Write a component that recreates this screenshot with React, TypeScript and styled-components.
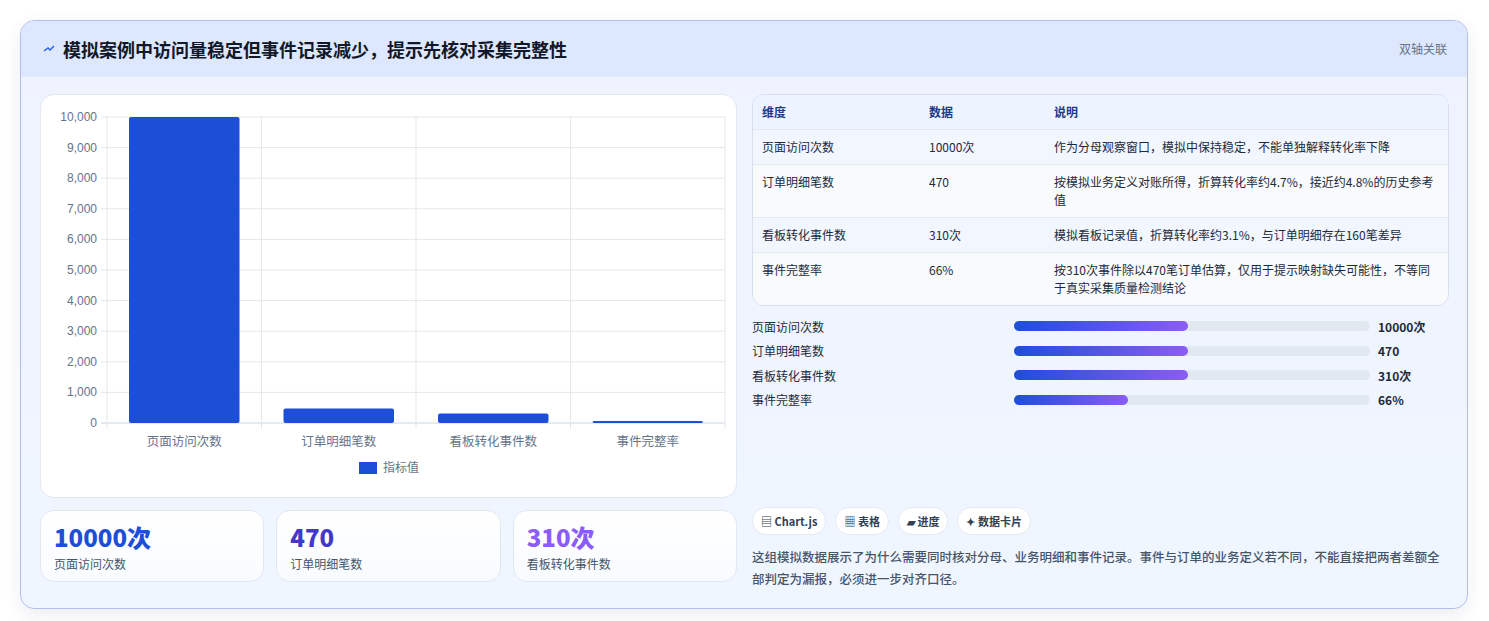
import styled, { createGlobalStyle } from 'styled-components';

const GlobalStyle = createGlobalStyle`
  body {
    margin: 0;
    background: #ffffff;
    font-family: "Noto Sans CJK SC", "Noto Sans", sans-serif;
    color: #1e293b;
  }
`;

const Page = styled.div`
  padding: 20px 21px 22px 20px;
`;

const Panel = styled.section`
  border: 1px solid #b4c0ec;
  border-radius: 14px;
  background: linear-gradient(180deg, #eef3ff 0%, #f0f6ff 100%);
  box-shadow: 0 6px 18px rgba(30, 41, 90, 0.08);
  overflow: hidden;
`;

const Header = styled.header`
  height: 55px;
  display: flex;
  align-items: center;
  justify-content: space-between;
  padding: 0 20px 0 22px;
  background: #dde7fd;
  border-bottom: 1px solid #e3eafb;
`;

const Title = styled.h2`
  margin: 0;
  font-size: 18px;
  font-weight: 700;
  color: #111827;
  display: flex;
  align-items: center;
  gap: 8px;
`;

const Tag = styled.span`
  font-size: 12px;
  color: #64748b;
`;

const Body = styled.div`
  display: grid;
  grid-template-columns: 697px 697px;
  gap: 15px;
  padding: 17px 19px 18px 19px;
`;

const Column = styled.div`
  display: flex;
  flex-direction: column;
`;

const ChartCard = styled.div`
  height: 402px;
  background: #ffffff;
  border: 1px solid #e2e8f0;
  border-radius: 14px;
  overflow: hidden;
`;

const StatRow = styled.div`
  display: grid;
  grid-template-columns: repeat(3, 1fr);
  gap: 12px;
  margin-top: 12px;
`;

const StatCard = styled.div`
  height: 72px;
  box-sizing: border-box;
  padding: 10px 13px;
  border: 1px solid #e2e8f0;
  border-radius: 14px;
  background: linear-gradient(180deg, #ffffff, #f8fbff);
`;

const StatValue = styled.div<{ $color: string }>`
  font-size: 24px;
  font-weight: 800;
  line-height: 32px;
  color: ${(p) => p.$color};
`;

const StatLabel = styled.div`
  font-size: 12px;
  color: #475569;
  margin-top: 2px;
`;

const Table = styled.div`
  border: 1px solid #d7e0ee;
  border-radius: 12px;
  overflow: hidden;
  background: #f8fafc;
`;

const Row = styled.div<{ $bg: string; $h: number }>`
  display: grid;
  grid-template-columns: 167px 125px 1fr;
  align-items: start;
  min-height: ${(p) => p.$h}px;
  box-sizing: border-box;
  padding: 8px 9px;
  background: ${(p) => p.$bg};
  border-top: 1px solid #e2e8f0;
  font-size: 12px;
  line-height: 18px;
  color: #1e293b;
  &:first-child {
    border-top: none;
    font-weight: 700;
    color: #1e3a8a;
  }
`;

const Bars = styled.div`
  display: flex;
  flex-direction: column;
  gap: 6.5px;
  margin-top: 11px;
`;

const BarLine = styled.div`
  display: grid;
  grid-template-columns: 262px 364px 1fr;
  align-items: center;
  gap: 0;
  height: 18px;
  font-size: 12px;
`;

const Track = styled.div`
  height: 10px;
  border-radius: 5px;
  background: #e2e8f0;
  margin-right: 8px;
`;

const Fill = styled.div`
  height: 100%;
  border-radius: 5px;
  background: linear-gradient(90deg, #1d4ed8, #8b5cf6);
`;

const BarValue = styled.span`
  font-weight: 700;
  padding-left: 0;
`;

const Chips = styled.div`
  display: flex;
  gap: 9px;
  margin-top: 98px;
`;

const Chip = styled.span`
  height: 28px;
  box-sizing: border-box;
  padding: 0 8px;
  display: inline-flex;
  align-items: center;
  gap: 3px;
  border: 1px solid #e5e9f2;
  border-radius: 14px;
  background: #ffffff;
  font-size: 11px;
  font-weight: 700;
  color: #334155;
`;

const Note = styled.p`
  margin: 11px 0 0;
  font-size: 12.5px;
  line-height: 22px;
  color: #475569;
  font-weight: 500;
`;

const data = [
  { name: '页面访问次数', value: 10000, text: '10000次' },
  { name: '订单明细笔数', value: 470, text: '470' },
  { name: '看板转化事件数', value: 310, text: '310次' },
  { name: '事件完整率', value: 66, text: '66%' },
];

function BarChart() {
  const left = 66;
  const right = 684;
  const top = 22;
  const bottom = 328;
  const h = bottom - top;
  const cw = (right - left) / 4;
  const ticks = Array.from({ length: 11 }, (_, i) => i * 1000);
  return (
    <svg width="697" height="402" style={{ display: 'block', fontFamily: '"Liberation Sans", Arial, sans-serif' }}>
      {ticks.map((t) => {
        const y = bottom - (t / 10000) * h;
        return (
          <g key={t}>
            <line x1={left - 6} x2={right} y1={y} y2={y} stroke={t === 0 ? '#cbd5e1' : '#e5e7eb'} />
            <text x={left - 10} y={y + 4} fontSize="12" fill="#64748b" textAnchor="end">
              {t.toLocaleString('en-US')}
            </text>
          </g>
        );
      })}
      {[0, 1, 2, 3, 4].map((i) => (
        <line key={i} x1={left + i * cw} x2={left + i * cw} y1={top} y2={bottom + 6} stroke="#e5e7eb" />
      ))}
      {data.map((d, i) => {
        const bh = Math.max((d.value / 10000) * h, 1.5);
        const x = left + i * cw + 22;
        return (
          <g key={d.name}>
            <rect x={x} y={bottom - bh} width={cw - 44} height={bh} fill="#1d4ed8" rx="2" />
            <text
              x={left + i * cw + cw / 2}
              y={bottom + 23}
              fontSize="12.5"
              fill="#64748b"
              textAnchor="middle"
              style={{ fontFamily: '"Noto Sans CJK SC", sans-serif' }}
            >
              {d.name}
            </text>
          </g>
        );
      })}
      <rect x="318" y="367" width="18" height="12" fill="#1d4ed8" />
      <text x="342" y="377" fontSize="12" fill="#64748b" style={{ fontFamily: '"Noto Sans CJK SC", sans-serif' }}>
        指标值
      </text>
    </svg>
  );
}

const rows = [
  { a: '页面访问次数', b: '10000次', c: '作为分母观察窗口，模拟中保持稳定，不能单独解释转化率下降', bg: '#f1f6ff', h: 35 },
  { a: '订单明细笔数', b: '470', c: '按模拟业务定义对账所得，折算转化率约4.7%，接近约4.8%的历史参考值', bg: '#f8fafc', h: 53 },
  { a: '看板转化事件数', b: '310次', c: '模拟看板记录值，折算转化率约3.1%，与订单明细存在160笔差异', bg: '#f1f6ff', h: 35 },
  { a: '事件完整率', b: '66%', c: '按310次事件除以470笔订单估算，仅用于提示映射缺失可能性，不等同于真实采集质量检测结论', bg: '#f8fafc', h: 52 },
];

const fills = [49, 49, 49, 32];

export default function App() {
  return (
    <Page>
      <GlobalStyle />
      <Panel>
        <Header>
          <Title>
            <svg width="12" height="12" viewBox="0 0 12 12">
              <path d="M1 8 L5 5 L7 7 L11 3" stroke="#2563eb" strokeWidth="1.5" fill="none" />
            </svg>
            模拟案例中访问量稳定但事件记录减少，提示先核对采集完整性
          </Title>
          <Tag>双轴关联</Tag>
        </Header>
        <Body>
          <Column>
            <ChartCard>
              <BarChart />
            </ChartCard>
            <StatRow>
              <StatCard>
                <StatValue $color="#1d4ed8">10000次</StatValue>
                <StatLabel>页面访问次数</StatLabel>
              </StatCard>
              <StatCard>
                <StatValue $color="#4338ca">470</StatValue>
                <StatLabel>订单明细笔数</StatLabel>
              </StatCard>
              <StatCard>
                <StatValue $color="#8b5cf6">310次</StatValue>
                <StatLabel>看板转化事件数</StatLabel>
              </StatCard>
            </StatRow>
          </Column>
          <Column>
            <Table>
              <Row $bg="#eef4ff" $h={33}>
                <span>维度</span>
                <span>数据</span>
                <span>说明</span>
              </Row>
              {rows.map((r) => (
                <Row key={r.a} $bg={r.bg} $h={r.h}>
                  <span>{r.a}</span>
                  <span>{r.b}</span>
                  <span>{r.c}</span>
                </Row>
              ))}
            </Table>
            <Bars>
              {data.map((d, i) => (
                <BarLine key={d.name}>
                  <span>{d.name}</span>
                  <Track>
                    <Fill style={{ width: `${fills[i]}%` }} />
                  </Track>
                  <BarValue>{d.text}</BarValue>
                </BarLine>
              ))}
            </Bars>
            <Chips>
              <Chip>▤ Chart.js</Chip>
              <Chip>▦ 表格</Chip>
              <Chip>▰ 进度</Chip>
              <Chip>✦ 数据卡片</Chip>
            </Chips>
            <Note>
              这组模拟数据展示了为什么需要同时核对分母、业务明细和事件记录。事件与订单的业务定义若不同，不能直接把两者差额全部判定为漏报，必须进一步对齐口径。
            </Note>
          </Column>
        </Body>
      </Panel>
    </Page>
  );
}
